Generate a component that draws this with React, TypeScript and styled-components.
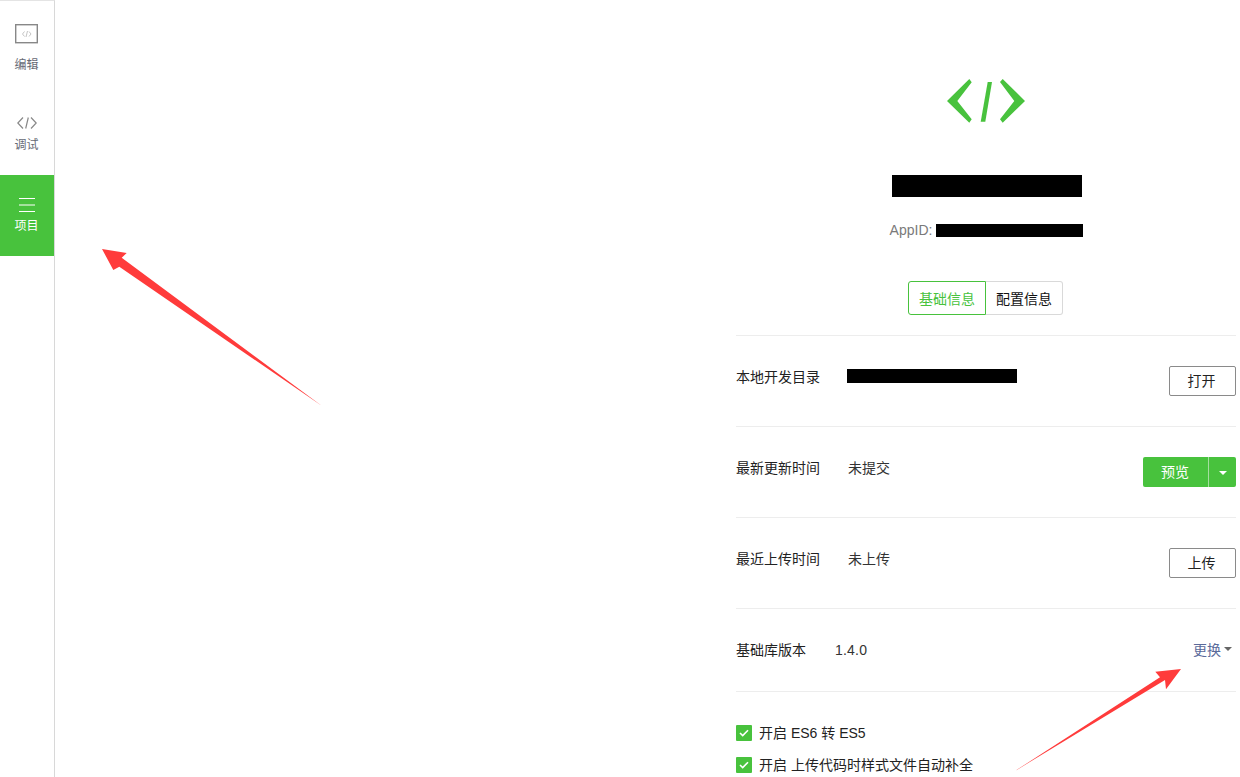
import styled, { createGlobalStyle } from "styled-components";

const GREEN = "#48c23d";

const GlobalStyle = createGlobalStyle`
    html, body {
        margin: 0;
        height: 100%;
        overflow: hidden;
        background: #ffffff;
    }
    * {
        box-sizing: border-box;
    }
`;

const Page = styled.div`
    position: relative;
    display: flex;
    justify-content: space-between;
    width: 1240px;
    height: 777px;
    overflow: hidden;
    font-family: "Liberation Sans", "Noto Sans CJK SC", sans-serif;
    color: #222222;
`;

const Sidebar = styled.nav`
    width: 55px;
    height: 100%;
    padding-top: 12px;
    border-right: 1px solid #d8d8d8;
    border-top: 1px solid #e4e4e4;
`;

const NavItem = styled.div<{ $active?: boolean; $top: number }>`
    display: flex;
    flex-direction: column;
    align-items: center;
    height: 81px;
    padding-top: ${(p) => p.$top}px;
    padding-right: 1px;
    font-size: 12px;
    line-height: 16px;
    color: ${(p) => (p.$active ? "#ffffff" : "#666a75")};
    background: ${(p) => (p.$active ? GREEN : "transparent")};
`;

const NavIcon = styled.div<{ $height: number; $gap: number }>`
    display: flex;
    justify-content: center;
    height: ${(p) => p.$height}px;
    margin-bottom: ${(p) => p.$gap}px;
`;

const Panel = styled.main`
    width: 500px;
    margin-right: 4px;
    padding-top: 78px;
`;

const Head = styled.header`
    display: flex;
    flex-direction: column;
    align-items: center;
    height: 258px;
    padding-left: 2px;
    border-bottom: 1px solid #ededed;
`;

const Redacted = styled.div<{ $w: number; $h: number }>`
    width: ${(p) => p.$w}px;
    height: ${(p) => p.$h}px;
    background: #000000;
`;

const Title = styled(Redacted)`
    margin-top: 50px;
`;

const AppId = styled.div`
    display: flex;
    align-items: center;
    gap: 4px;
    height: 16px;
    margin-top: 25px;
    margin-right: 1px;
    font-size: 14px;
    color: #7a7a7a;
`;

const Tabs = styled.div`
    display: flex;
    height: 34px;
    margin-top: 43px;
    margin-right: 3px;
`;

const Tab = styled.div<{ $active?: boolean }>`
    display: flex;
    align-items: center;
    justify-content: center;
    width: ${(p) => (p.$active ? "78px" : "77px")};
    font-size: 14px;
    color: ${(p) => (p.$active ? GREEN : "#111111")};
    border: 1px solid ${(p) => (p.$active ? GREEN : "#d9d9d9")};
    border-left-width: ${(p) => (p.$active ? "1px" : "0")};
    border-radius: ${(p) => (p.$active ? "3px 0 0 3px" : "0 3px 3px 0")};
`;

const Row = styled.section<{ $short?: boolean }>`
    display: flex;
    align-items: ${(p) => (p.$short ? "center" : "flex-start")};
    height: ${(p) => (p.$short ? "83px" : "91px")};
    padding-top: ${(p) => (p.$short ? "0" : "30px")};
    border-bottom: 1px solid #ededed;
    font-size: 14px;
`;

const Label = styled.div<{ $short?: boolean }>`
    width: ${(p) => (p.$short ? "99px" : "112px")};
    line-height: 22px;
    color: #222222;
`;

const Value = styled.div`
    flex: 1;
    line-height: 22px;
    color: #333333;
`;

const Version = styled(Value)`
    letter-spacing: 0.2px;
`;

const RedactedPath = styled(Redacted)`
    margin-top: 3px;
    margin-left: -1px;
`;

const OutlineButton = styled.button`
    width: 67px;
    height: 30px;
    padding: 0 2px 2px 0;
    font: inherit;
    font-size: 14px;
    color: #222222;
    background: #ffffff;
    border: 1px solid #8a8a8a;
    border-radius: 2px;
`;

const SplitButton = styled.div`
    display: flex;
    width: 93px;
    height: 30px;
    color: #ffffff;
    background: ${GREEN};
    border-radius: 2px;
    font-size: 14px;
`;

const SplitMain = styled.div`
    display: flex;
    align-items: center;
    justify-content: center;
    width: 66px;
    padding: 0 1px 2px 0;
    border-right: 1px solid #a5df9f;
`;

const SplitCaret = styled.div`
    flex: 1;
    display: flex;
    align-items: center;
    justify-content: center;
    &::after {
        content: "";
        margin-top: 1px;
        border-top: 4px solid #ffffff;
        border-left: 4px solid transparent;
        border-right: 4px solid transparent;
    }
`;

const SwitchLink = styled.div`
    display: flex;
    align-items: center;
    gap: 3px;
    margin: 0 4px 2px 0;
    font-size: 14px;
    color: #5a6a9a;
    &::after {
        content: "";
        border-top: 4px solid #666666;
        border-left: 4px solid transparent;
        border-right: 4px solid transparent;
    }
`;

const Options = styled.div`
    display: flex;
    flex-direction: column;
    gap: 16px;
    padding-top: 33px;
`;

const Option = styled.label`
    display: flex;
    align-items: center;
    gap: 7px;
    height: 16px;
    font-size: 14px;
    color: #222222;
`;

const OptionText = styled.span`
    margin-bottom: 2px;
`;

const Check = styled.span`
    display: flex;
    align-items: center;
    justify-content: center;
    width: 16px;
    height: 16px;
    background: ${GREEN};
    border-radius: 1px;
`;

const Logo = styled.svg`
    display: block;
`;

const Arrows = styled.svg`
    position: absolute;
    inset: 0;
    pointer-events: none;
`;

const CheckMark = () => (
    <svg width="10" height="8" viewBox="0 0 10 8" fill="none" stroke="#ffffff" strokeWidth="1.6">
        <path d="M1 4l2.700 2.600L9 1.200" />
    </svg>
);

const App = () => {
    return (
        <Page>
            <GlobalStyle />
            <Sidebar>
                <NavItem $top={11}>
                    <NavIcon $height={30} $gap={3}>
                        <svg width="23" height="20" viewBox="0 0 23 20" fill="none">
                            <rect x="0.7" y="0.7" width="21.600" height="18" fill="#ffffff" stroke="#888888" strokeWidth="1.4" />
                            <path d="M9.500 7.500L7.500 10l2 2.500M14 7.500l2 2.500-2 2.500M12.500 7l-1.500 6" stroke="#aaaaaa" strokeWidth="0.7" />
                        </svg>
                    </NavIcon>
                    编辑
                </NavItem>
                <NavItem $top={9}>
                    <NavIcon $height={31} $gap={3}>
                        <svg width="20" height="31" viewBox="0 0 20 31" fill="none" stroke="#888888" strokeWidth="1.2">
                            <path d="M6 14.500L.8 20 6 25.500M14 14.500l5.200 5.500-5.200 5.500M11.300 14.500l-2.600 11" />
                        </svg>
                    </NavIcon>
                    调试
                </NavItem>
                <NavItem $active $top={23}>
                    <NavIcon $height={14} $gap={6}>
                        <svg width="16" height="14" viewBox="0 0 16 14" stroke="#ffffff" strokeWidth="1">
                            <path d="M0 .5h16M0 7h16M0 13.500h16" />
                        </svg>
                    </NavIcon>
                    项目
                </NavItem>
            </Sidebar>
            <Panel>
                <Head>
                    <Logo width="80" height="47" viewBox="0 0 80 47" fill={GREEN}>
                        <path d="M22.300 1l2.400 3.300L10.300 23l14.400 18.300-2.400 3.400L0 23z" />
                        <path d="M55.700 1L53 4l14.300 19L53 41.300l2.700 3.400L78 23z" />
                        <path d="M40.700 4H45l-6.700 39.700h-4.600z" />
                    </Logo>
                    <Title $w={190} $h={22} />
                    <AppId>
                        AppID:
                        <Redacted $w={147} $h={13} />
                    </AppId>
                    <Tabs>
                        <Tab $active>基础信息</Tab>
                        <Tab>配置信息</Tab>
                    </Tabs>
                </Head>
                <Row>
                    <Label>本地开发目录</Label>
                    <Value>
                        <RedactedPath $w={170} $h={14} />
                    </Value>
                    <OutlineButton>打开</OutlineButton>
                </Row>
                <Row>
                    <Label>最新更新时间</Label>
                    <Value>未提交</Value>
                    <SplitButton>
                        <SplitMain>预览</SplitMain>
                        <SplitCaret />
                    </SplitButton>
                </Row>
                <Row>
                    <Label>最近上传时间</Label>
                    <Value>未上传</Value>
                    <OutlineButton>上传</OutlineButton>
                </Row>
                <Row $short>
                    <Label $short>基础库版本</Label>
                    <Version>1.4.0</Version>
                    <SwitchLink>更换</SwitchLink>
                </Row>
                <Options>
                    <Option>
                        <Check>
                            <CheckMark />
                        </Check>
                        <OptionText>开启 ES6 转 ES5</OptionText>
                    </Option>
                    <Option>
                        <Check>
                            <CheckMark />
                        </Check>
                        <OptionText>开启 上传代码时样式文件自动补全</OptionText>
                    </Option>
                </Options>
            </Panel>
            <Arrows width="1240" height="777" viewBox="0 0 1240 777" fill="#ff3b3b">
                <path d="M102 249L126.700 253 121.700 257.700 322 406 119.300 266.700 113.300 270z" />
                <path d="M1015.300 770.800L1165 680 1166 689.300 1181 669 1155.300 671.700 1160 677.300z" />
            </Arrows>
        </Page>
    );
};

export default App;
